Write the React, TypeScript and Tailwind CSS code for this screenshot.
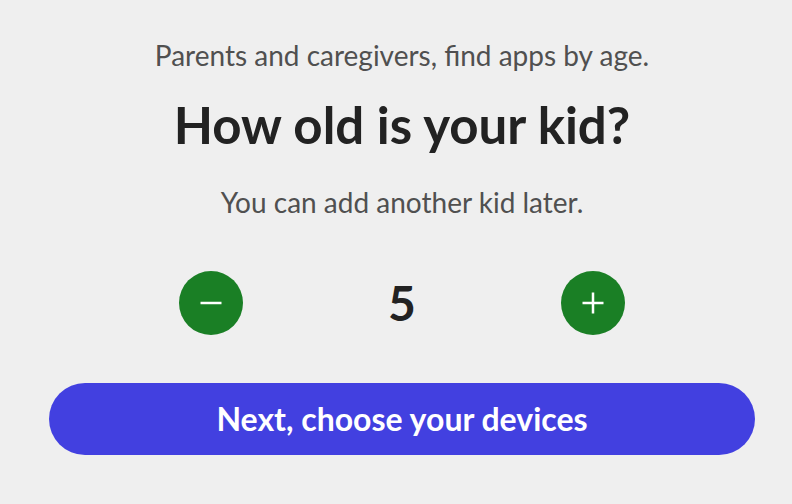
import { useState } from 'react';

const AgePicker = () => {
  const [age, setAge] = useState(5);

  return (
    <div className="min-h-screen w-full bg-[#efefef] flex flex-col items-center pl-[12px] font-['Lato',sans-serif]">
      <p className="mt-[38px] text-[28px] leading-[34px] text-[#505050]">
        Parents and caregivers, find apps by age.
      </p>
      <h1 className="mt-[23px] text-[51px] leading-[60px] font-bold text-[#222222]">
        How old is your kid?
      </h1>
      <p className="mt-[30px] text-[28px] leading-[34px] text-[#505050]">
        You can add another kid later.
      </p>

      <div className="mt-[52px] flex items-center gap-[139px]">
        <button
          className="w-[64px] h-[64px] rounded-full bg-[#1a7f25] flex items-center justify-center"
          onClick={() => setAge(Math.max(0, age - 1))}
        >
          <svg width="22" height="22" viewBox="0 0 22 22">
            <path d="M0.5 11h21" stroke="white" strokeWidth="2.5" />
          </svg>
        </button>
        <span className="w-[40px] text-center text-[48px] leading-none font-bold text-[#222222]">
          {age}
        </span>
        <button
          className="w-[64px] h-[64px] rounded-full bg-[#1a7f25] flex items-center justify-center"
          onClick={() => setAge(age + 1)}
        >
          <svg width="22" height="22" viewBox="0 0 22 22">
            <path d="M0.5 11h21M11 0.5v21" stroke="white" strokeWidth="2.5" />
          </svg>
        </button>
      </div>

      <button className="mt-[48px] w-[706px] h-[72px] rounded-[36px] bg-[#4240e0] text-white text-[32px] font-bold">
        Next, choose your devices
      </button>
    </div>
  );
};

export default function App() {
  return <AgePicker />;
}
